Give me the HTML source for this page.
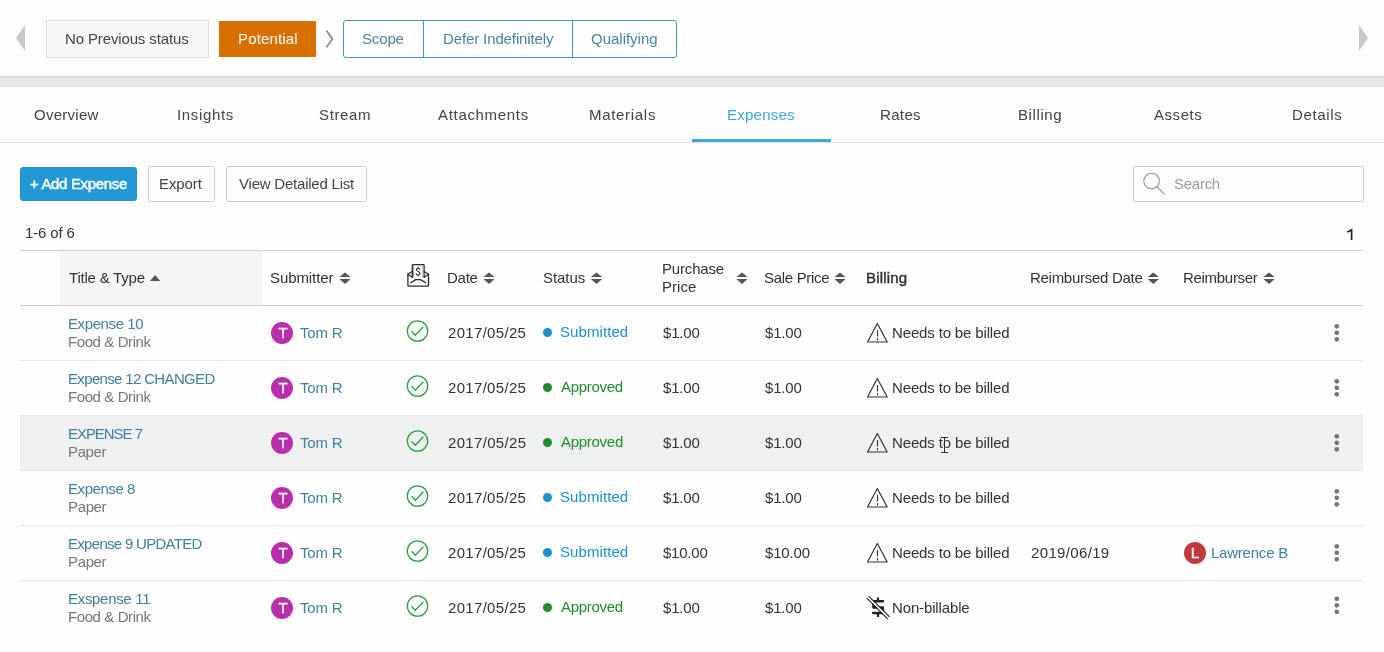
<!DOCTYPE html>
<html><head><meta charset="utf-8"><title>Expenses</title>
<style>
html,body{margin:0;padding:0;}
body{width:1384px;height:652px;overflow:hidden;position:relative;background:#fdfdfd;font-family:"Liberation Sans",sans-serif;font-size:15px;}
.a{position:absolute;box-sizing:border-box;}
.t{position:absolute;line-height:18px;white-space:nowrap;will-change:transform;}
svg{position:absolute;left:0;top:0;}
</style></head><body>

<div class="a" style="left:46px;top:20px;width:163px;height:38px;background:#f8f8f8;border:1px solid #dedede;"></div>
<div class="a" style="left:219px;top:21px;width:97px;height:36px;background:#d87000;"></div>
<div class="a" style="left:343px;top:20px;width:334px;height:38px;border:1px solid #4497b9;border-radius:3px;"></div>
<div class="a" style="left:423px;top:20px;width:1px;height:38px;background:#4497b9;"></div>
<div class="a" style="left:572px;top:20px;width:1px;height:38px;background:#4497b9;"></div>
<div class="a" style="left:0px;top:76px;width:1384px;height:11px;background:linear-gradient(#d4d4d4 0px,#d4d4d4 1px,#e0e0e0 1px,#e0e0e0 2px,#e8e8e8 2px,#e8e8e8 10px,#e3e3e3 10px);"></div>
<div class="a" style="left:0px;top:142px;width:1384px;height:1px;background:#e3e3e3;"></div>
<div class="a" style="left:692px;top:139px;width:139px;height:3px;background:#3aa6dc;"></div>
<div class="a" style="left:20px;top:167px;width:117px;height:34px;background:#2299d3;border:1px solid #1f8cc2;border-radius:3px;box-sizing:border-box;"></div>
<div class="a" style="left:148px;top:166px;width:67px;height:36px;background:#fdfdfd;border:1px solid #cfcfcf;border-radius:2px;box-sizing:border-box;"></div>
<div class="a" style="left:226px;top:166px;width:141px;height:36px;background:#fdfdfd;border:1px solid #cfcfcf;border-radius:2px;box-sizing:border-box;"></div>
<div class="a" style="left:1133px;top:166px;width:231px;height:36px;background:#fdfdfd;border:1px solid #cfcfcf;border-radius:2px;box-sizing:border-box;"></div>
<div class="a" style="left:20px;top:250px;width:1343px;height:1px;background:#cfcfcf;"></div>
<div class="a" style="left:60px;top:251px;width:202px;height:54px;background:#f5f5f5;"></div>
<div class="a" style="left:20px;top:305px;width:1343px;height:1px;background:#cfcfcf;"></div>
<div class="a" style="left:20px;top:360px;width:1343px;height:1px;background:#e6e6e6;"></div>
<div class="a" style="left:20px;top:415px;width:1343px;height:1px;background:#e6e6e6;"></div>
<div class="a" style="left:20px;top:416px;width:1343px;height:54px;background:#eff1f1;"></div>
<div class="a" style="left:20px;top:470px;width:1343px;height:1px;background:#e6e6e6;"></div>
<div class="a" style="left:20px;top:525px;width:1343px;height:1px;background:#e6e6e6;"></div>
<div class="a" style="left:20px;top:580px;width:1343px;height:1px;background:#e6e6e6;"></div>
<svg width="1384" height="652" viewBox="0 0 1384 652"><polygon points="25,25 16,38 25,51" fill="#c9c9c9"/>
<polygon points="1359,25 1368,38 1359,51" fill="#c9c9c9"/>
<polyline points="326.4,30.6 332.4,38.9 326.4,47.3" fill="none" stroke="#8a8a8a" stroke-width="1.7"/>
<circle cx="1151.6" cy="181" r="7.8" fill="none" stroke="#999" stroke-width="1.15"/>
<line x1="1157.2" y1="186.8" x2="1164.7" y2="194.6" stroke="#999" stroke-width="1.2"/>
<path d="M1351.6,240 V229.9 L1347.3,231.9" fill="none" stroke="#222" stroke-width="1.7" stroke-linejoin="miter"/>
<polygon points="150,281 160.2,281 155.1,275" fill="#555"/>
<polygon points="339.4,277.0 350.6,277.0 345,272.5" fill="#555"/>
<polygon points="339.4,279.0 350.6,279.0 345,284.1" fill="#555"/>
<polygon points="483.4,277.0 494.6,277.0 489,272.5" fill="#555"/>
<polygon points="483.4,279.0 494.6,279.0 489,284.1" fill="#555"/>
<polygon points="590.9,277.0 602.1,277.0 596.5,272.5" fill="#555"/>
<polygon points="590.9,279.0 602.1,279.0 596.5,284.1" fill="#555"/>
<polygon points="736.4,277.0 747.6,277.0 742,272.5" fill="#555"/>
<polygon points="736.4,279.0 747.6,279.0 742,284.1" fill="#555"/>
<polygon points="834.4,277.0 845.6,277.0 840,272.5" fill="#555"/>
<polygon points="834.4,279.0 845.6,279.0 840,284.1" fill="#555"/>
<polygon points="1147.7,277.0 1158.8999999999999,277.0 1153.3,272.5" fill="#555"/>
<polygon points="1147.7,279.0 1158.8999999999999,279.0 1153.3,284.1" fill="#555"/>
<polygon points="1263.4,277.0 1274.6,277.0 1269,272.5" fill="#555"/>
<polygon points="1263.4,279.0 1274.6,279.0 1269,284.1" fill="#555"/>
<g fill="none" stroke="#2a2a2a" stroke-width="1.3" stroke-linejoin="round" stroke-linecap="round">
<path d="M407.9,274.2 V285.2 Q407.9,286.1 408.8,286.1 H427.6 Q428.5,286.1 428.5,285.2 V274.2"/>
<path d="M407.9,274.2 L412.3,271.5 M407.9,274.2 L412.3,277.3 M428.5,274.2 L424.1,271.5 M428.5,274.2 L424.1,277.3"/>
<path d="M412.3,277.3 V265.3 Q412.3,264.6 413,264.6 H423.4 Q424.1,264.6 424.1,265.3 V277.3"/>
<path d="M410.7,282.8 L415.7,279.6 H420.6 L425.6,282.8"/>
<path d="M413.4,266 V276.5 M423,266 V276.5" stroke="#9a9a9a" stroke-width="1"/>
<path d="M419.7,269.4 Q419.4,268.3 418.1,268.3 Q416.5,268.3 416.5,269.7 Q416.5,270.9 418.2,271.5 Q420,272.1 420,273.6 Q420,275 418.2,275 Q416.6,275 416.3,273.8 M418.2,267.2 V268.3 M418.2,275 V276" stroke-width="1.1"/>
</g>
<circle cx="282" cy="333.0" r="11" fill="#b82fab"/>
<circle cx="417.5" cy="331.0" r="10.2" fill="none" stroke="#2ea043" stroke-width="1.3"/>
<polyline points="411.5,331.3 415.3,335.3 423.3,326.7" fill="none" stroke="#2ea043" stroke-width="1.3"/>
<circle cx="547.5" cy="332.5" r="4.5" fill="#1b91d0"/>
<path d="M877.3,323.5 L867.5,342.0 L887.2,342.0 Z" fill="none" stroke="#333" stroke-width="1.2" stroke-linejoin="round"/>
<line x1="877.5" y1="330.0" x2="877.5" y2="336.5" stroke="#333" stroke-width="1.1"/>
<line x1="877.5" y1="338.1" x2="877.5" y2="340.5" stroke="#333" stroke-width="1.1"/>
<circle cx="1336.8" cy="326.3" r="2.35" fill="#767676"/>
<circle cx="1336.8" cy="332.8" r="2.35" fill="#767676"/>
<circle cx="1336.8" cy="339.3" r="2.35" fill="#767676"/>
<circle cx="282" cy="388.0" r="11" fill="#b82fab"/>
<circle cx="417.5" cy="386.0" r="10.2" fill="none" stroke="#2ea043" stroke-width="1.3"/>
<polyline points="411.5,386.3 415.3,390.3 423.3,381.7" fill="none" stroke="#2ea043" stroke-width="1.3"/>
<circle cx="547.5" cy="387.5" r="4.5" fill="#1f8c2c"/>
<path d="M877.3,378.5 L867.5,397.0 L887.2,397.0 Z" fill="none" stroke="#333" stroke-width="1.2" stroke-linejoin="round"/>
<line x1="877.5" y1="385.0" x2="877.5" y2="391.5" stroke="#333" stroke-width="1.1"/>
<line x1="877.5" y1="393.1" x2="877.5" y2="395.5" stroke="#333" stroke-width="1.1"/>
<circle cx="1336.8" cy="381.3" r="2.35" fill="#767676"/>
<circle cx="1336.8" cy="387.8" r="2.35" fill="#767676"/>
<circle cx="1336.8" cy="394.3" r="2.35" fill="#767676"/>
<circle cx="282" cy="443.0" r="11" fill="#b82fab"/>
<circle cx="417.5" cy="441.0" r="10.2" fill="none" stroke="#2ea043" stroke-width="1.3"/>
<polyline points="411.5,441.3 415.3,445.3 423.3,436.7" fill="none" stroke="#2ea043" stroke-width="1.3"/>
<circle cx="547.5" cy="442.5" r="4.5" fill="#1f8c2c"/>
<path d="M877.3,433.5 L867.5,452.0 L887.2,452.0 Z" fill="none" stroke="#333" stroke-width="1.2" stroke-linejoin="round"/>
<line x1="877.5" y1="440.0" x2="877.5" y2="446.5" stroke="#333" stroke-width="1.1"/>
<line x1="877.5" y1="448.1" x2="877.5" y2="450.5" stroke="#333" stroke-width="1.1"/>
<circle cx="1336.8" cy="436.3" r="2.35" fill="#767676"/>
<circle cx="1336.8" cy="442.8" r="2.35" fill="#767676"/>
<circle cx="1336.8" cy="449.3" r="2.35" fill="#767676"/>
<circle cx="282" cy="498.0" r="11" fill="#b82fab"/>
<circle cx="417.5" cy="496.0" r="10.2" fill="none" stroke="#2ea043" stroke-width="1.3"/>
<polyline points="411.5,496.3 415.3,500.3 423.3,491.7" fill="none" stroke="#2ea043" stroke-width="1.3"/>
<circle cx="547.5" cy="497.5" r="4.5" fill="#1b91d0"/>
<path d="M877.3,488.5 L867.5,507.0 L887.2,507.0 Z" fill="none" stroke="#333" stroke-width="1.2" stroke-linejoin="round"/>
<line x1="877.5" y1="495.0" x2="877.5" y2="501.5" stroke="#333" stroke-width="1.1"/>
<line x1="877.5" y1="503.1" x2="877.5" y2="505.5" stroke="#333" stroke-width="1.1"/>
<circle cx="1336.8" cy="491.3" r="2.35" fill="#767676"/>
<circle cx="1336.8" cy="497.8" r="2.35" fill="#767676"/>
<circle cx="1336.8" cy="504.3" r="2.35" fill="#767676"/>
<circle cx="282" cy="553.0" r="11" fill="#b82fab"/>
<circle cx="417.5" cy="551.0" r="10.2" fill="none" stroke="#2ea043" stroke-width="1.3"/>
<polyline points="411.5,551.3 415.3,555.3 423.3,546.7" fill="none" stroke="#2ea043" stroke-width="1.3"/>
<circle cx="547.5" cy="552.5" r="4.5" fill="#1b91d0"/>
<path d="M877.3,543.5 L867.5,562.0 L887.2,562.0 Z" fill="none" stroke="#333" stroke-width="1.2" stroke-linejoin="round"/>
<line x1="877.5" y1="550.0" x2="877.5" y2="556.5" stroke="#333" stroke-width="1.1"/>
<line x1="877.5" y1="558.1" x2="877.5" y2="560.5" stroke="#333" stroke-width="1.1"/>
<circle cx="1195" cy="553.0" r="11" fill="#c0393f"/>
<circle cx="1336.8" cy="546.3" r="2.35" fill="#767676"/>
<circle cx="1336.8" cy="552.8" r="2.35" fill="#767676"/>
<circle cx="1336.8" cy="559.3" r="2.35" fill="#767676"/>
<circle cx="282" cy="608.0" r="11" fill="#b82fab"/>
<circle cx="417.5" cy="606.0" r="10.2" fill="none" stroke="#2ea043" stroke-width="1.3"/>
<polyline points="411.5,606.3 415.3,610.3 423.3,601.7" fill="none" stroke="#2ea043" stroke-width="1.3"/>
<circle cx="547.5" cy="607.5" r="4.5" fill="#1f8c2c"/>
<g stroke="#222" fill="none">
<path d="M883,601.3 L873.5,601.3 L873.5,607.5 L882.8,607.5 L882.8,613.0 L873.2,613.0" stroke-width="2.6" stroke-linecap="round" stroke-linejoin="round"/>
<line x1="878" y1="597.5" x2="878" y2="601.5" stroke-width="2.2"/>
<line x1="878" y1="613.0" x2="878" y2="617.0" stroke-width="2.2"/>
<line x1="867.8" y1="597.2" x2="888.6" y2="617.8" stroke="#fff" stroke-width="2"/>
<line x1="867.8" y1="597.2" x2="888.6" y2="617.8" stroke-width="1.1" transform="translate(-1,1)"/>
<line x1="867.8" y1="597.2" x2="888.6" y2="617.8" stroke-width="1.1" transform="translate(1,-1)"/>
</g>
<circle cx="1336.8" cy="598.8" r="2.35" fill="#767676"/>
<circle cx="1336.8" cy="605.3" r="2.35" fill="#767676"/>
<circle cx="1336.8" cy="611.8" r="2.35" fill="#767676"/></svg>
<div class="t" id="noprev" style="top:30px;color:#444;letter-spacing:-0.133px;left:65.41px;">No Previous status</div>
<div class="t" id="potential" style="top:30px;color:#fff;letter-spacing:0.151px;left:237.55px;">Potential</div>
<div class="t" id="scope" style="top:30px;color:#4884a1;letter-spacing:-0.142px;left:362.34px;">Scope</div>
<div class="t" id="defer" style="top:30px;color:#4884a1;letter-spacing:-0.121px;left:442.82px;">Defer Indefinitely</div>
<div class="t" id="qual" style="top:30px;color:#4884a1;letter-spacing:-0.013px;left:590.88px;">Qualifying</div>
<div class="t" id="tabOverview" style="top:106px;color:#444;letter-spacing:0.261px;left:34.49px;">Overview</div>
<div class="t" id="tabInsights" style="top:106px;color:#444;letter-spacing:0.66px;left:177.04px;">Insights</div>
<div class="t" id="tabStream" style="top:106px;color:#444;letter-spacing:0.641px;left:318.68px;">Stream</div>
<div class="t" id="tabAttachments" style="top:106px;color:#444;letter-spacing:0.681px;left:438.36px;">Attachments</div>
<div class="t" id="tabMaterials" style="top:106px;color:#444;letter-spacing:0.693px;left:588.51px;">Materials</div>
<div class="t" id="tabExpenses" style="top:106px;color:#3fa7d6;letter-spacing:0.248px;left:727.48px;">Expenses</div>
<div class="t" id="tabRates" style="top:106px;color:#444;letter-spacing:0.348px;left:879.63px;">Rates</div>
<div class="t" id="tabBilling" style="top:106px;color:#444;letter-spacing:0.596px;left:1017.53px;">Billing</div>
<div class="t" id="tabAssets" style="top:106px;color:#444;letter-spacing:0.559px;left:1153.92px;">Assets</div>
<div class="t" id="tabDetails" style="top:106px;color:#444;letter-spacing:0.631px;left:1291.63px;">Details</div>
<div class="t" id="add" style="top:175px;color:#fff;letter-spacing:-0.339px;left:29.82px;-webkit-text-stroke:0.45px #fff;">+ Add Expense</div>
<div class="t" id="export" style="top:175px;color:#444;letter-spacing:-0.083px;left:159.29px;">Export</div>
<div class="t" id="vdl" style="top:175px;color:#444;letter-spacing:-0.218px;left:239.17px;">View Detailed List</div>
<div class="t" id="search" style="top:175px;color:#999;letter-spacing:-0.262px;left:1174.02px;">Search</div>
<div class="t" id="count" style="top:224px;color:#333;letter-spacing:-0.155px;left:25.44px;">1-6 of 6</div>
<div class="t" id="hTitle" style="top:269px;color:#333;letter-spacing:-0.216px;left:69.24px;">Title &amp; Type</div>
<div class="t" id="hSub" style="top:269px;color:#333;letter-spacing:-0.08px;left:270.46px;">Submitter</div>
<div class="t" id="hDate" style="top:269px;color:#333;letter-spacing:-0.241px;left:447.22px;">Date</div>
<div class="t" id="hStatus" style="top:269px;color:#333;letter-spacing:-0.056px;left:543.34px;">Status</div>
<div class="t" id="hPurch" style="top:260px;color:#333;letter-spacing:-0.165px;left:662.34px;">Purchase</div>
<div class="t" id="hPrice" style="top:278px;color:#333;letter-spacing:0.032px;left:662.34px;">Price</div>
<div class="t" id="hSale" style="top:269px;color:#333;letter-spacing:-0.312px;left:764.34px;">Sale Price</div>
<div class="t" id="hBill" style="top:269px;color:#333;letter-spacing:0.197px;left:866.1px;-webkit-text-stroke:0.45px #333;">Billing</div>
<div class="t" id="hRD" style="top:269px;color:#333;letter-spacing:-0.284px;left:1030.46px;">Reimbursed Date</div>
<div class="t" id="hRr" style="top:269px;color:#333;letter-spacing:-0.301px;left:1183.0px;">Reimburser</div>
<div class="t" id="r0t" style="top:315px;color:#427f9c;letter-spacing:-0.398px;left:68.48px;">Expense 10</div>
<div class="t" id="r0s" style="top:333px;color:#777;letter-spacing:-0.408px;left:68.48px;">Food &amp; Drink</div>
<div class="t" id="r0av" style="top:324px;color:#fff;left:-17.5px;width:600px;text-align:center;-webkit-text-stroke:0.3px #fff;">T</div>
<div class="t" id="r0sub" style="top:324px;color:#427f9c;letter-spacing:-0.189px;left:299.72px;">Tom R</div>
<div class="t" id="r0d" style="top:324px;color:#333;letter-spacing:0.315px;left:447.86px;">2017/05/25</div>
<div class="t" id="r0st" style="top:323px;color:#1b91d0;letter-spacing:0.075px;left:560.12px;">Submitted</div>
<div class="t" id="r0pp" style="top:324px;color:#333;letter-spacing:-0.204px;left:662.99px;">$1.00</div>
<div class="t" id="r0sp" style="top:324px;color:#333;letter-spacing:-0.204px;left:765.33px;">$1.00</div>
<div class="t" id="r0b" style="top:324px;color:#333;letter-spacing:-0.148px;left:892.46px;">Needs to be billed</div>
<div class="t" id="r1t" style="top:370px;color:#427f9c;letter-spacing:-0.656px;left:68.48px;">Expense 12 CHANGED</div>
<div class="t" id="r1s" style="top:388px;color:#777;letter-spacing:-0.408px;left:68.48px;">Food &amp; Drink</div>
<div class="t" id="r1av" style="top:379px;color:#fff;left:-17.5px;width:600px;text-align:center;-webkit-text-stroke:0.3px #fff;">T</div>
<div class="t" id="r1sub" style="top:379px;color:#427f9c;letter-spacing:-0.189px;left:299.72px;">Tom R</div>
<div class="t" id="r1d" style="top:379px;color:#333;letter-spacing:0.315px;left:447.86px;">2017/05/25</div>
<div class="t" id="r1st" style="top:378px;color:#1f8c2c;letter-spacing:-0.288px;left:561.33px;">Approved</div>
<div class="t" id="r1pp" style="top:379px;color:#333;letter-spacing:-0.204px;left:662.99px;">$1.00</div>
<div class="t" id="r1sp" style="top:379px;color:#333;letter-spacing:-0.204px;left:765.33px;">$1.00</div>
<div class="t" id="r1b" style="top:379px;color:#333;letter-spacing:-0.148px;left:892.46px;">Needs to be billed</div>
<div class="t" id="r2t" style="top:425px;color:#427f9c;letter-spacing:-1.049px;left:68.48px;">EXPENSE 7</div>
<div class="t" id="r2s" style="top:443px;color:#777;letter-spacing:-0.366px;left:68.48px;">Paper</div>
<div class="t" id="r2av" style="top:434px;color:#fff;left:-17.5px;width:600px;text-align:center;-webkit-text-stroke:0.3px #fff;">T</div>
<div class="t" id="r2sub" style="top:434px;color:#427f9c;letter-spacing:-0.184px;left:299.72px;">Tom R</div>
<div class="t" id="r2d" style="top:434px;color:#333;letter-spacing:0.332px;left:447.86px;">2017/05/25</div>
<div class="t" id="r2st" style="top:433px;color:#1f8c2c;letter-spacing:-0.284px;left:561.33px;">Approved</div>
<div class="t" id="r2pp" style="top:434px;color:#333;letter-spacing:-0.204px;left:662.99px;">$1.00</div>
<div class="t" id="r2sp" style="top:434px;color:#333;letter-spacing:-0.204px;left:765.33px;">$1.00</div>
<div class="t" id="r2b" style="top:434px;color:#333;letter-spacing:-0.141px;left:891.97px;">Needs to be billed</div>
<div class="t" id="r3t" style="top:480px;color:#427f9c;letter-spacing:-0.438px;left:68.48px;">Expense 8</div>
<div class="t" id="r3s" style="top:498px;color:#777;letter-spacing:-0.359px;left:68.48px;">Paper</div>
<div class="t" id="r3av" style="top:489px;color:#fff;left:-17.5px;width:600px;text-align:center;-webkit-text-stroke:0.3px #fff;">T</div>
<div class="t" id="r3sub" style="top:489px;color:#427f9c;letter-spacing:-0.189px;left:299.72px;">Tom R</div>
<div class="t" id="r3d" style="top:489px;color:#333;letter-spacing:0.315px;left:447.86px;">2017/05/25</div>
<div class="t" id="r3st" style="top:488px;color:#1b91d0;letter-spacing:0.075px;left:560.12px;">Submitted</div>
<div class="t" id="r3pp" style="top:489px;color:#333;letter-spacing:-0.204px;left:662.99px;">$1.00</div>
<div class="t" id="r3sp" style="top:489px;color:#333;letter-spacing:-0.204px;left:765.33px;">$1.00</div>
<div class="t" id="r3b" style="top:489px;color:#333;letter-spacing:-0.148px;left:892.46px;">Needs to be billed</div>
<div class="t" id="r4t" style="top:535px;color:#427f9c;letter-spacing:-0.701px;left:68.48px;">Expense 9 UPDATED</div>
<div class="t" id="r4s" style="top:553px;color:#777;letter-spacing:-0.359px;left:68.48px;">Paper</div>
<div class="t" id="r4av" style="top:544px;color:#fff;left:-17.5px;width:600px;text-align:center;-webkit-text-stroke:0.3px #fff;">T</div>
<div class="t" id="r4sub" style="top:544px;color:#427f9c;letter-spacing:-0.189px;left:299.72px;">Tom R</div>
<div class="t" id="r4d" style="top:544px;color:#333;letter-spacing:0.315px;left:447.86px;">2017/05/25</div>
<div class="t" id="r4st" style="top:543px;color:#1b91d0;letter-spacing:0.075px;left:560.12px;">Submitted</div>
<div class="t" id="r4pp" style="top:544px;color:#333;letter-spacing:-0.221px;left:662.99px;">$10.00</div>
<div class="t" id="r4sp" style="top:544px;color:#333;letter-spacing:-0.177px;left:765.33px;">$10.00</div>
<div class="t" id="r4b" style="top:544px;color:#333;letter-spacing:-0.148px;left:892.46px;">Needs to be billed</div>
<div class="t" id="r4rd" style="top:544px;color:#333;letter-spacing:0.348px;left:1030.98px;">2019/06/19</div>
<div class="t" id="r4av2" style="top:544px;color:#fff;left:895.3px;width:600px;text-align:center;-webkit-text-stroke:0.3px #fff;">L</div>
<div class="t" id="r4rr" style="top:544px;color:#427f9c;letter-spacing:-0.224px;left:1211.26px;">Lawrence B</div>
<div class="t" id="r5t" style="top:590px;color:#427f9c;letter-spacing:-0.31px;left:68.48px;">Exspense 11</div>
<div class="t" id="r5s" style="top:608px;color:#777;letter-spacing:-0.408px;left:68.48px;">Food &amp; Drink</div>
<div class="t" id="r5av" style="top:599px;color:#fff;left:-17.5px;width:600px;text-align:center;-webkit-text-stroke:0.3px #fff;">T</div>
<div class="t" id="r5sub" style="top:599px;color:#427f9c;letter-spacing:-0.189px;left:299.72px;">Tom R</div>
<div class="t" id="r5d" style="top:599px;color:#333;letter-spacing:0.315px;left:447.86px;">2017/05/25</div>
<div class="t" id="r5st" style="top:598px;color:#1f8c2c;letter-spacing:-0.288px;left:561.33px;">Approved</div>
<div class="t" id="r5pp" style="top:599px;color:#333;letter-spacing:-0.204px;left:662.99px;">$1.00</div>
<div class="t" id="r5sp" style="top:599px;color:#333;letter-spacing:-0.204px;left:765.33px;">$1.00</div>
<div class="t" id="r5b" style="top:599px;color:#333;letter-spacing:-0.136px;left:892.22px;">Non-billable</div>
<svg width="1384" height="652" viewBox="0 0 1384 652" style="z-index:5"><g fill="none" stroke-linecap="butt"><path d="M941,437.5 H948 M944.5,437.5 V452.5 M941,452.5 H948" stroke="#fff" stroke-width="2.2" stroke-opacity="0.7"/><path d="M941,437.5 H948 M944.5,437.5 V452.5 M941,452.5 H948" stroke="#111" stroke-width="0.9"/></g></svg>
</body></html>
